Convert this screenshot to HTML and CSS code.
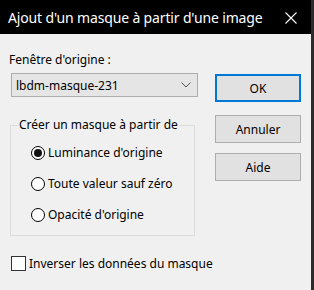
FILE: index.html
```html
<!DOCTYPE html>
<html lang="fr">

<head>
    <meta charset="UTF-8">
    <title>Ajout d'un masque à partir d'une image</title>
    <link rel="stylesheet" href="styles.css">
</head>

<body>
    <div class="window">
        <header class="titlebar">
            <span class="title">Ajout d'un masque à partir d'une image</span>
            <span class="close">
                <svg width="12" height="12" viewBox="0 0 12 12"><path d="M0.5 0.5 L11.5 11.5 M11.5 0.5 L0.5 11.5" stroke="#fff" stroke-width="1.1" fill="none"/></svg>
            </span>
        </header>

        <main class="body">
            <section class="left">
                <label class="field-label">Fenêtre d'origine :</label>
                <div class="combo">
                    <span>lbdm-masque-231</span>
                    <svg width="10" height="6" viewBox="0 0 10 6"><path d="M0.5 0.5 L5 5 L9.5 0.5" stroke="#555" stroke-width="1" fill="none"/></svg>
                </div>

                <fieldset class="group">
                    <legend>Créer un masque à partir de</legend>
                    <div class="radio"><span class="dot checked"></span>Luminance d'origine</div>
                    <div class="radio"><span class="dot"></span>Toute valeur sauf zéro</div>
                    <div class="radio"><span class="dot"></span>Opacité d'origine</div>
                </fieldset>

                <div class="check"><span class="box"></span>Inverser les données du masque</div>
            </section>

            <section class="buttons">
                <button class="btn default">OK</button>
                <button class="btn">Annuler</button>
                <button class="btn">Aide</button>
            </section>
        </main>
    </div>
</body>

</html>
```

FILE: styles.css
```css
body {
    margin: 0;
    font-family: "Noto Sans", sans-serif;
    font-size: 12px;
    color: #000;
    background: #f0f0f0;
}

.window {
    width: 311px;
    height: 290px;
    background: #f0f0f0;
    border-right: 3px solid #2b2b2b;
    overflow: hidden;
}

.titlebar {
    height: 34px;
    background: #000;
    color: #fff;
    display: flex;
    align-items: center;
    justify-content: space-between;
    padding-left: 8px;
}

.title {
    font-size: 14px;
    letter-spacing: -0.15px;
    white-space: nowrap;
}

.close {
    width: 40px;
    display: flex;
    justify-content: center;
    padding-top: 1px;
}

.body {
    display: flex;
}

.left {
    width: 188px;
    padding-left: 10px;
    white-space: nowrap;
}

.field-label {
    display: block;
    margin: 17px 0 0 -1px;
    line-height: 17px;
}

.combo {
    box-sizing: border-box;
    height: 24px;
    width: 187px;
    margin: 5px 0 0 1px;
    background: #e5e5e5;
    border: 1px solid #adadad;
    display: flex;
    align-items: center;
    justify-content: space-between;
    padding: 0 6px 0 4px;
}

.group {
    margin: 21px 0 0 0;
    width: 185px;
    height: 118px;
    box-sizing: border-box;
    border: 1px solid #dcdcdc;
    padding: 5px 0 0 20px;
}

.group legend {
    padding: 0 1px;
    margin-left: -13px;
    line-height: 14px;
}

.radio {
    display: flex;
    align-items: center;
    height: 31px;
    gap: 3px;
}

.dot {
    flex: none;
    box-sizing: border-box;
    width: 14px;
    height: 14px;
    border: 1px solid #000;
    border-radius: 50%;
    background: #fff;
    display: flex;
    align-items: center;
    justify-content: center;
}

.dot.checked::after {
    content: "";
    width: 8px;
    height: 8px;
    border-radius: 50%;
    background: #111;
}

.check {
    display: flex;
    align-items: center;
    gap: 3px;
    margin: 19px 0 0 1px;
}

.box {
    flex: none;
    box-sizing: border-box;
    width: 15px;
    height: 15px;
    border: 1px solid #333;
    background: #fff;
}

.buttons {
    display: flex;
    flex-direction: column;
    padding: 40px 0 0 17px;
}

.btn {
    box-sizing: border-box;
    width: 86px;
    height: 28px;
    margin-bottom: 10px;
    background: #e1e1e1;
    border: 1px solid #adadad;
    font-family: inherit;
    font-size: 12px;
    color: #000;
    padding: 0;
}

.btn.default {
    border: 2px solid #0078d7;
    margin-bottom: 13px;
}
```
